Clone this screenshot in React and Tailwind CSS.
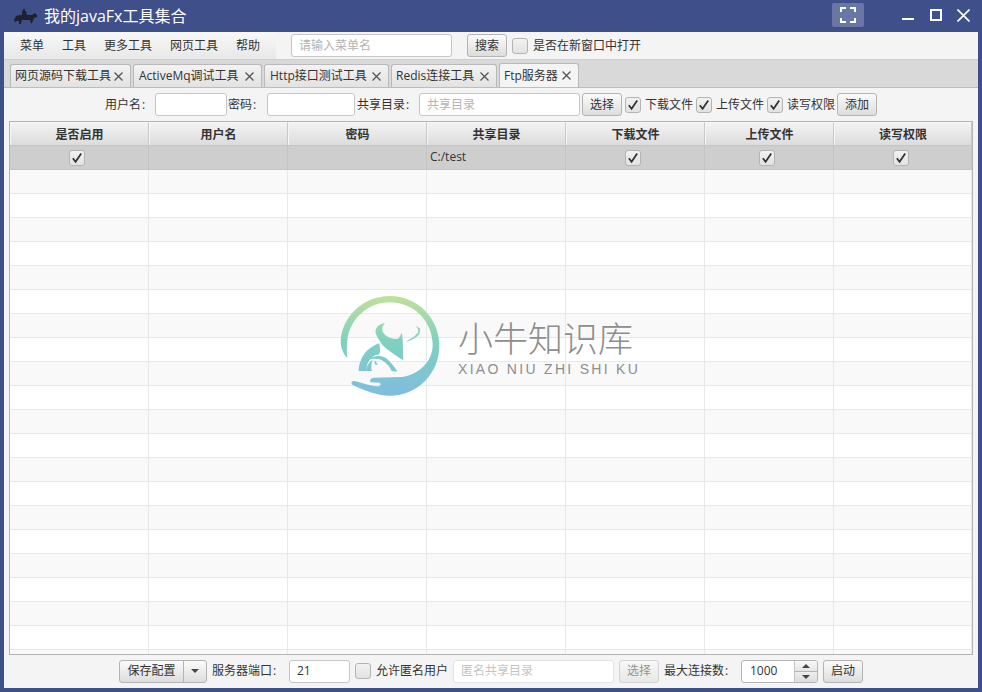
const btn = "flex items-center justify-center h-[23px] rounded-[3px] border border-[#b4b4b4] bg-gradient-to-b from-[#fbfbfb] to-[#dddddd] text-[12px] text-[#333333] shrink-0";
const input = "flex items-center h-[23px] rounded-[3px] border border-[#c6c6c6] bg-white text-[12px] shrink-0 px-[7px]";

function Check({ on, className = "" }) {
  return (
    <span className={"flex items-center justify-center w-4 h-4 rounded-[3px] border border-[#b4b4b4] bg-gradient-to-b from-[#f2f2f2] to-[#e2e2e2] shrink-0 " + className}>
      {on && (
        <svg width="12" height="12" viewBox="0 0 12 12" fill="none">
          <path d="M1.8 6.2 L4.6 9.8 L10.2 1.6" stroke="#333333" strokeWidth="1.8" />
        </svg>
      )}
    </span>
  );
}

function Tab({ label, width, active, wide }) {
  return (
    <div className={"flex items-center rounded-t-[3px] border border-b-0 border-[#b9b9b9] shrink-0 " + (wide ? "pl-[5px] " : "pl-[4px] ") + (active ? "h-6 bg-[#f4f4f4]" : "bg-gradient-to-b from-[#f3f3f3] to-[#e2e2e2] h-[23px]")} style={{ width }}>
      <span className="text-[12px] text-[#333333] whitespace-nowrap flex-1">{label}</span>
      <svg width="9" height="9" viewBox="0 0 9 9" className="mr-[7px] shrink-0" fill="none">
        <path d="M0.5 0.5 L8.5 8.5 M8.5 0.5 L0.5 8.5" stroke="#555555" strokeWidth="1.3" />
      </svg>
    </div>
  );
}

const cols = [139, 139, 139, 139, 139, 129, 138];
const heads = ["是否启用", "用户名", "密码", "共享目录", "下载文件", "上传文件", "读写权限"];

function Row({ kind, first }) {
  const bg = first ? "bg-[#cecece]" : kind ? "bg-[#f9f9f9]" : "bg-white";
  const line = first ? "border-[#c4c4c4]" : "border-[#e8e8e8]";
  const centered = first ? "justify-center pr-[4px]" : "";
  return (
    <div className={"flex h-6 shrink-0 border-b " + line + " " + bg}>
      {cols.map((w, i) => (
        <div key={i} className={"flex items-center h-full border-r shrink-0 " + line + " " + (i === 0 || i > 3 ? centered : "")} style={{ width: w }}>
          {first && (i === 0 || i > 3) && <Check on />}
          {first && i === 3 && <span className="text-[12px] text-[#333333] pl-[3px] -mt-[2px]">C:/test</span>}
        </div>
      ))}
    </div>
  );
}

function Logo() {
  return (
    <svg width="105" height="105" viewBox="0 0 315 315" fill="none">
      <defs>
        <linearGradient id="ring" x1="0" y1="0" x2="0" y2="305" gradientUnits="userSpaceOnUse">
          <stop offset="0" stopColor="#c3e09a" />
          <stop offset="0.45" stopColor="#7ed2bf" />
          <stop offset="1" stopColor="#80bce0" />
        </linearGradient>
      </defs>
      <path d="M22 190 C5 170 2 150 2 140 C5 65 70 3 150 3 C232 3 298 70 298 152 C298 235 232 302 150 302 C110 302 70 285 38 270 C32 265 34 258 42 258 C60 262 90 272 112 274 C122 274 125 266 118 263 L92 262 C88 256 92 250 100 248 L185 246 C235 240 278 200 278 150 C278 80 222 22 150 22 C85 22 30 70 22 135 C20 155 20 175 22 190 Z" fill="url(#ring)" />
      <g fill="url(#ring)">
        <path d="M135 84 C115 88 102 100 108 118 C112 130 122 140 124 146 C135 160 165 180 190 196 L188 135 L186 113 L176 130 C165 134 150 130 138 122 C125 112 122 98 135 84 Z" />
        <path d="M56 228 C56 205 68 175 90 160 C100 152 110 148 118 145 C120 158 122 168 118 178 C100 180 88 192 82 208 L78 228 Z" />
        <path d="M84 195 C100 180 130 178 145 195 C155 205 165 218 172 230 L155 228 C150 215 140 205 125 195 C112 190 95 190 84 195 Z" />
        <path d="M78 228 C80 212 88 200 98 194 C94 204 92 218 96 228 Z M104 194 L114 210 L104 208 Z" />
        <path d="M195 143 C215 135 245 125 240 100 L225 92 C235 100 238 108 232 115 C222 128 205 135 195 143 Z" />
      </g>
    </svg>
  );
}

export default function App() {
  return (
    <div className="w-[982px] h-[692px] flex flex-col bg-[#3f4f89] px-1 pb-1 overflow-hidden relative" style={{ fontFamily: '"Open Sans","Noto Sans CJK SC",sans-serif' }}>
      {/* title bar */}
      <div className="flex items-center h-8 shrink-0">
        <svg width="26" height="18" viewBox="0 0 26 18" className="ml-[8px]" fill="#20212e">
          <path d="M2 13 L4 9 L8 8 L10 8 L10 4 L11 4 L11 2 L13 2 L13 4 L14 4 L15 8 L20 8 L23 6 L25 8 L25 10 L22 11 L21 14 L19 17 L18 13 L10 13 L9 17 L7 17 L7 14 L5 14 L3 15 Z" />
        </svg>
        <span className="ml-[6px] text-[16px] text-white whitespace-nowrap">我的javaFx工具集合</span>
        <div className="flex-1" />
        <div className="flex items-center justify-center w-8 h-6 rounded-[2px] bg-[#6a76a6] -mt-[2px]">
          <svg width="16" height="16" viewBox="0 0 16 16" fill="none" stroke="white" strokeWidth="2">
            <path d="M1 5 V1 H6 M10 1 H15 V5 M15 11 V15 H10 M6 15 H1 V11" />
          </svg>
        </div>
        <svg width="12" height="12" viewBox="0 0 12 12" className="ml-[38px] -mt-[2px]" fill="none" stroke="white" strokeWidth="2">
          <path d="M0 10 H12" />
        </svg>
        <svg width="12" height="12" viewBox="0 0 12 12" className="ml-[16px] -mt-[2px]" fill="none" stroke="white" strokeWidth="2">
          <rect x="1" y="1" width="10" height="10" />
        </svg>
        <svg width="13" height="13" viewBox="0 0 13 13" className="ml-[15px] mr-[8px] -mt-[2px]" fill="none" stroke="white" strokeWidth="1.6">
          <path d="M0.5 0.5 L12.5 12.5 M12.5 0.5 L0.5 12.5" />
        </svg>
      </div>

      <div className="flex-1 flex flex-col bg-[#f4f4f4] min-h-0 relative">
        {/* menu bar */}
        <div className="flex items-center h-[27px] shrink-0">
          <div className="flex items-center w-[272px] h-full pl-[7px] bg-gradient-to-b from-[#f8f8f8] to-[#e8e8e8] text-[12px] text-[#333333]">
            {["菜单", "工具", "更多工具", "网页工具", "帮助"].map((m) => (
              <span key={m} className="px-[9px] whitespace-nowrap">{m}</span>
            ))}
          </div>
          <div className={input + " w-[161px] ml-[15px] text-[#b4b4b4]"}>请输入菜单名</div>
          <div className={btn + " w-10 ml-[15px]"}>搜索</div>
          <Check className="ml-[5px]" />
          <span className="ml-[5px] text-[12px] text-[#333333] whitespace-nowrap">是否在新窗口中打开</span>
        </div>

        {/* tabs */}
        <div className="flex items-end gap-[2px] h-[29px] shrink-0 pl-[6px] bg-[#d9d9d9] border-t border-t-[#cfcfcf] border-b border-b-[#bdbdbd]">
          <Tab label="网页源码下载工具" width={121} />
          <Tab label="ActiveMq调试工具" width={129} wide />
          <Tab label="Http接口测试工具" width={125} wide />
          <Tab label="Redis连接工具" width={106} />
          <Tab label="Ftp服务器" width={80} active />
        </div>

        {/* form */}
        <div className="flex items-center justify-center h-[33px] shrink-0 text-[12px] text-[#333333]">
          <span className="w-[50px] whitespace-nowrap">用户名<span className="ml-[1px]">:</span></span>
          <div className={input + " w-[72px]"} />
          <span className="w-[40px] pl-[1px] whitespace-nowrap">密码<span className="ml-[1px]">:</span></span>
          <div className={input + " w-[88px]"} />
          <span className="w-[64px] pl-[2px] whitespace-nowrap">共享目录<span className="ml-[1px]">:</span></span>
          <div className={input + " w-[161px] text-[#b4b4b4]"}>共享目录</div>
          <div className={btn + " w-10 ml-[2px]"}>选择</div>
          <Check on className="ml-[3px]" />
          <span className="ml-[4px] w-[51px] whitespace-nowrap">下载文件</span>
          <Check on />
          <span className="ml-[4px] w-[51px] whitespace-nowrap">上传文件</span>
          <Check on />
          <span className="ml-[4px] w-[50px] whitespace-nowrap">读写权限</span>
          <div className={btn + " w-10"}>添加</div>
        </div>

        {/* table */}
        <div className="flex-1 min-h-0 mx-[5px] border border-[#b4b4b4] bg-white overflow-hidden flex flex-col relative">
          <div className="flex h-6 shrink-0 border-b border-[#c4c4c4]">
            {cols.map((w, i) => (
              <div key={i} className="flex items-center justify-center h-full pt-[1px] shrink-0 border-r border-[#c8c8c8] border-l border-l-[#f6f6f6] border-t border-t-[#f6f6f6] bg-gradient-to-b from-[#f3f3f3] to-[#dcdcdc] text-[12px] font-bold text-[#333333]" style={{ width: w }}>
                {heads[i]}
              </div>
            ))}
          </div>
          <Row first />
          {Array.from({ length: 21 }).map((_, i) => (
            <Row key={i} kind={i % 2 === 0} />
          ))}
        </div>

        {/* bottom */}
        <div className="flex items-center justify-center h-[33px] shrink-0 text-[12px] text-[#333333] pb-[1px]">
          <div className={btn + " w-[88px]"}>
            <span className="flex items-center justify-center w-16 h-full border-r border-[#b4b4b4]">保存配置</span>
            <span className="flex items-center justify-center flex-1 h-full">
              <svg width="8" height="4" viewBox="0 0 8 4" fill="#444444"><path d="M0 0 H8 L4 4 Z" /></svg>
            </span>
          </div>
          <span className="ml-[5px] w-[77px] whitespace-nowrap">服务器端口<span className="ml-[1px]">:</span></span>
          <div className={input + " w-[61px]"}>21</div>
          <Check className="ml-[5px]" />
          <span className="ml-[5px] w-[77px] whitespace-nowrap">允许匿名用户</span>
          <div className={input + " w-[161px] text-[#c4c4c4] border-[#e2e2e2] bg-[#f7f7f7]"}>匿名共享目录</div>
          <div className={btn + " w-10 ml-[5px] opacity-50"}>选择</div>
          <span className="ml-[5px] w-[77px] whitespace-nowrap">最大连接数<span className="ml-[1px]">:</span></span>
          <div className="flex h-[23px] w-[77px] rounded-[3px] border border-[#b4b4b4] bg-white overflow-hidden shrink-0">
            <span className="flex items-center flex-1 pl-[8px]">1000</span>
            <div className="flex flex-col w-[23px] border-l border-[#c4c4c4]">
              <span className="flex items-center justify-center flex-1 border-b border-[#b4b4b4] bg-gradient-to-b from-[#f8f8f8] to-[#e6e6e6]">
                <svg width="8" height="4" viewBox="0 0 8 4" fill="#444444"><path d="M0 4 H8 L4 0 Z" /></svg>
              </span>
              <span className="flex items-center justify-center flex-1 bg-gradient-to-b from-[#eeeeee] to-[#dcdcdc]">
                <svg width="8" height="4" viewBox="0 0 8 4" fill="#444444"><path d="M0 0 H8 L4 4 Z" /></svg>
              </span>
            </div>
          </div>
          <div className={btn + " w-10 ml-[5px]"}>启动</div>
        </div>

        {/* watermark */}
        <div className="absolute left-[336px] top-[263px] pointer-events-none">
          <Logo />
        </div>
        <div className="absolute left-[454px] top-[284px] pointer-events-none flex flex-col">
          <span className="text-[35px] leading-[42px] font-light text-[#8e8e8e] whitespace-nowrap" style={{ fontFamily: '"Noto Sans CJK SC",sans-serif' }}>小牛知识库</span>
          <span className="text-[14px] leading-[14px] tracking-[2.3px] mt-[4px] text-[#8e8e8e] whitespace-nowrap" style={{ fontFamily: '"Liberation Sans",sans-serif' }}>XIAO NIU ZHI SHI KU</span>
        </div>
      </div>
    </div>
  );
}
